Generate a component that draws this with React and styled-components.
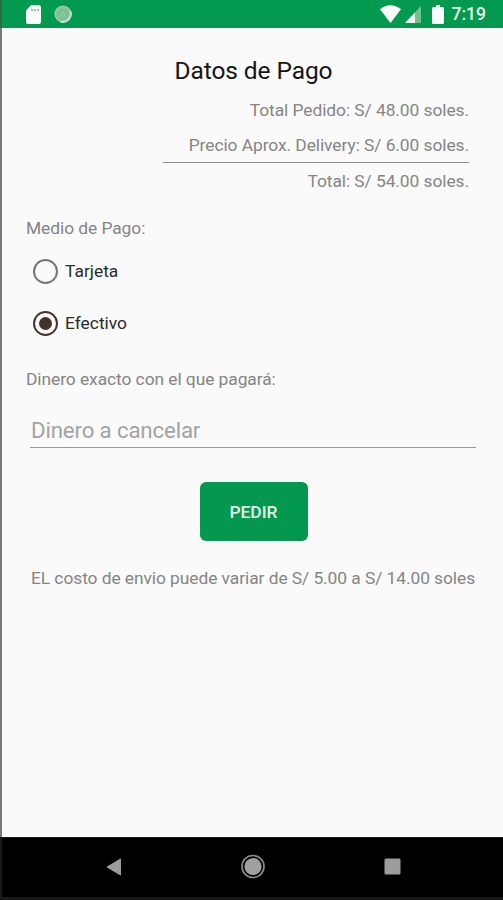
import React, { useState } from "react";
import styled, { createGlobalStyle } from "styled-components";

const GlobalStyle = createGlobalStyle`
  * { box-sizing: border-box; }
  body { margin: 0; background: #fafafa; font-family: Roboto, sans-serif; }
`;

const Screen = styled.div`
  display: flex;
  flex-direction: column;
  width: 503px;
  height: 900px;
  overflow: hidden;
  background: #fafafa;
`;

const StatusBar = styled.header`
  display: flex;
  align-items: center;
  justify-content: space-between;
  height: 28px;
  padding: 0 17px 0 24px;
  background: #03994f;
  border-left: 2px solid #2c6b4b;
`;

const StatusGroup = styled.div`
  display: flex;
  align-items: center;
`;

const StatusIcon = styled.svg`
  display: block;
  flex: none;
  margin-right: ${(p) => p.$gap || 0}px;
`;

const Clock = styled.span`
  font-size: 17.5px;
  font-weight: 500;
  line-height: 28px;
  color: #e6f7ec;
`;

const Content = styled.main`
  flex: 1;
  display: flex;
  flex-direction: column;
  padding: 25px 27px 0 24px;
  border-left: 2px solid #777;
`;

const Title = styled.h1`
  align-self: center;
  margin: 0 0 3px 5px;
  font-size: 24.5px;
  font-weight: 400;
  letter-spacing: -0.1px;
  line-height: 36px;
  color: #151515;
`;

const Totals = styled.section`
  align-self: flex-end;
  width: 306px;
  margin-right: 7px;
`;

const TotalLine = styled.div`
  height: ${(p) => p.$height}px;
  line-height: ${(p) => p.$leading || 36}px;
  font-size: 17.4px;
  letter-spacing: -0.07px;
  text-align: right;
  white-space: nowrap;
  color: #858585;
  border-bottom: ${(p) => (p.$ruled ? "1.5px solid #8f8f8f" : "none")};
`;

const FieldLabel = styled.div`
  margin-top: ${(p) => p.$top}px;
  font-size: 17.4px;
  letter-spacing: -0.07px;
  line-height: 24px;
  color: #858585;
`;

const RadioGroup = styled.div`
  margin-top: 5px;
`;

const RadioRow = styled.label`
  display: flex;
  align-items: center;
  gap: 7px;
  height: 52px;
  padding-left: 7px;
  font-size: 17.4px;
  color: #2b2b2b;
`;

const RadioInput = styled.input`
  appearance: none;
  display: grid;
  place-items: center;
  flex: none;
  width: 25px;
  height: 25px;
  margin: 0;
  border: 2px solid #757575;
  border-radius: 50%;

  &:checked { border-color: #45342f; }
  &:checked::before {
    content: "";
    width: 13px;
    height: 13px;
    border-radius: 50%;
    background: #45302b;
  }
`;

const MoneyInput = styled.input`
  width: 446px;
  height: 36px;
  margin: 21px 0 0 4px;
  padding: 1px 1px 0;
  border: 0;
  border-bottom: 1.5px solid #999;
  border-radius: 0;
  outline: 0;
  background: transparent;
  font: 400 22.3px Roboto, sans-serif;
  letter-spacing: -0.17px;
  color: #222;

  &::placeholder { color: #a3a3a3; opacity: 1; }
`;

const OrderButton = styled.button`
  align-self: center;
  width: 108px;
  height: 59px;
  margin: 34px 0 0 5px;
  padding: 0;
  border: 0;
  border-radius: 6px;
  background: #04984f;
  font: 500 17.4px Roboto, sans-serif;
  color: #e2f5e9;
`;

const Notice = styled.p`
  margin: 24px 0 0 5px;
  font-size: 17.4px;
  letter-spacing: -0.07px;
  line-height: 26px;
  white-space: nowrap;
  color: #858585;
`;

const NavBar = styled.nav`
  display: flex;
  align-items: center;
  height: 63px;
  padding: 0 99px 2px 98px;
  justify-content: space-between;
  background: #000;
  border: solid #191919;
  border-width: 1px 0 3px 2px;
`;

const NavButton = styled.button`
  display: block;
  padding: 0;
  border: 0;
  background: none;
  line-height: 0;
`;

function App() {
  const [method, setMethod] = useState("Efectivo");
  return (
    <Screen>
      <GlobalStyle />
      <StatusBar>
        <StatusGroup>
          <StatusIcon $gap={13} width="15" height="19" viewBox="0 0 15 19">
            <path d="M5 .3h8q2 0 2 2V17q0 2-2 2H2q-2 0-2-2V5.5z" fill="#f8fffa" />
            <path d="M6 4v2M9 4v2M12 4v2" stroke="#87bb9e" strokeWidth="1.7" />
          </StatusIcon>
          <StatusIcon width="18" height="18" viewBox="0 0 18 18">
            <circle cx="9" cy="9" r="8" fill="#83c49b" stroke="#99d0ab" strokeWidth="1.2" />
            <path d="M16.2 5.8A8 8 0 0 1 6.3 16.5" fill="none" stroke="#c4e9d0" strokeWidth="1.8" />
            <circle cx="9" cy="9" r="4.5" fill="none" stroke="#76b98e" />
          </StatusIcon>
        </StatusGroup>
        <StatusGroup>
          <StatusIcon $gap={4} width="21" height="18" viewBox="0 0 21 18">
            <path d="M0 4.2Q10.5-3.9 21 4.2L10.5 18z" fill="#fff" />
          </StatusIcon>
          <StatusIcon $gap={11} width="16" height="17" viewBox="0 0 16 17">
            <path d="M16 0v17H0z" fill="#77bd92" />
            <path d="M10 6.4V17H0z" fill="#effaf2" />
          </StatusIcon>
          <StatusIcon $gap={8} width="12" height="19" viewBox="0 0 12 19">
            <path d="M4 0h4v2h2.5q1.5 0 1.5 1.5v14q0 1.5-1.5 1.5h-9Q0 19 0 17.5v-14Q0 2 1.5 2H4z" fill="#fff" />
          </StatusIcon>
          <Clock>7:19</Clock>
        </StatusGroup>
      </StatusBar>

      <Content>
        <Title>Datos de Pago</Title>
        <Totals>
          <TotalLine $height={36}>Total Pedido: S/ 48.00 soles.</TotalLine>
          <TotalLine $height={35} $leading={34} $ruled>Precio Aprox. Delivery: S/ 6.00 soles.</TotalLine>
          <TotalLine $height={36}>Total: S/ 54.00 soles.</TotalLine>
        </Totals>

        <FieldLabel $top={17}>Medio de Pago:</FieldLabel>
        <RadioGroup role="radiogroup">
          {["Tarjeta", "Efectivo"].map((name) => (
            <RadioRow key={name}>
              <RadioInput
                type="radio"
                name="method"
                checked={method === name}
                onChange={() => setMethod(name)}
              />
              {name}
            </RadioRow>
          ))}
        </RadioGroup>

        <FieldLabel $top={18}>Dinero exacto con el que pagará:</FieldLabel>
        <MoneyInput placeholder="Dinero a cancelar" />
        <OrderButton>PEDIR</OrderButton>
        <Notice>EL costo de envio puede variar de S/ 5.00 a S/ 14.00 soles</Notice>
      </Content>

      <NavBar>
        <NavButton aria-label="Atrás">
          <svg width="26" height="26" viewBox="0 0 26 26">
            <path d="M20.5 5v16L7 13z" fill="#9c9c9c" stroke="#9c9c9c" strokeLinejoin="round" />
          </svg>
        </NavButton>
        <NavButton aria-label="Inicio">
          <svg width="26" height="26" viewBox="0 0 26 26">
            <circle cx="12" cy="12.5" r="11" fill="none" stroke="#898989" strokeWidth="1.7" />
            <circle cx="12" cy="12.5" r="8.6" fill="#a0a0a0" />
          </svg>
        </NavButton>
        <NavButton aria-label="Recientes">
          <svg width="22" height="26" viewBox="0 0 22 26">
            <rect x="2.5" y="4.5" width="16" height="16" rx="1.5" fill="#9c9c9c" />
          </svg>
        </NavButton>
      </NavBar>
    </Screen>
  );
}

export default App;
